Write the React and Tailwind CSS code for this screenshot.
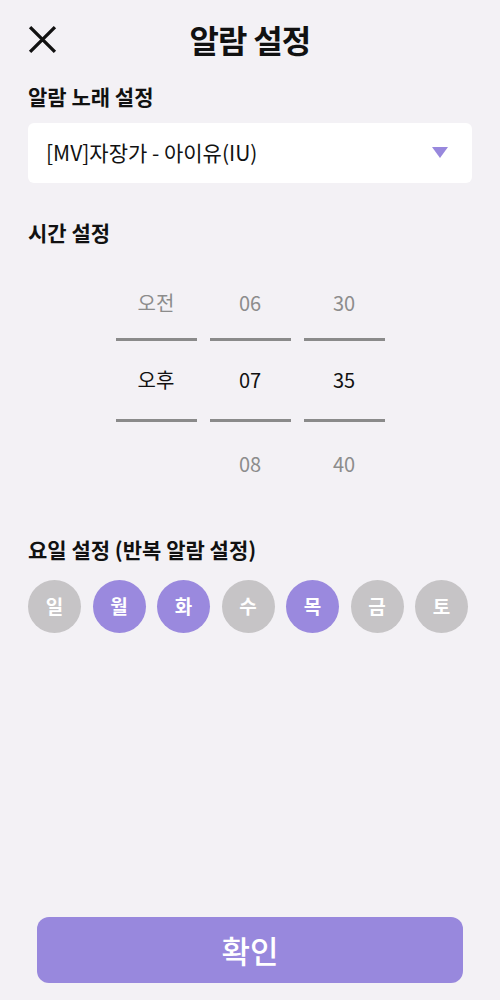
import React, { useState } from "react";

const days = ["일", "월", "화", "수", "목", "금", "토"];

const PickerColumn = ({ top, middle, bottom }) => (
    <div className="flex flex-col items-center w-[81px]">
        <div className="h-[50px] flex items-center text-[20px] text-[#8c8c8c]">{top}</div>
        <div className="h-[10px]" />
        <div className="w-full h-[3px] bg-[#8a8a8a]" />
        <div className="h-[78px] flex items-center text-[20px] text-[#111]">{middle}</div>
        <div className="w-full h-[3px] bg-[#8a8a8a]" />
        <div className="h-[84px] flex items-center text-[20px] text-[#8c8c8c]">{bottom}</div>
    </div>
);

const App = () => {
    const [selected, setSelected] = useState([false, true, true, false, true, false, false]);

    const toggleDay = (index) => {
        setSelected(selected.map((v, i) => (i === index ? !v : v)));
    };

    return (
        <div
            className="h-[1000px] flex flex-col bg-[#f3f1f5] text-[#111]"
            style={{ fontFamily: '"Noto Sans CJK KR", "Noto Sans", sans-serif' }}
        >
            {/* header */}
            <div className="relative flex items-center justify-center h-[78px]">
                <button className="absolute left-[28px] top-[25px] w-[29px] h-[29px]">
                    <svg viewBox="0 0 28 28" className="w-full h-full" fill="none" stroke="#111" strokeWidth="3.2">
                        <path d="M2 2 L26 26 M26 2 L2 26" />
                    </svg>
                </button>
                <h1 className="text-[32px] font-bold tracking-tight">알람 설정</h1>
            </div>

            <div className="px-[28px]">
                <p className="text-[21px] font-bold mt-[3px]">알람 노래 설정</p>
                <div className="mt-[10px] h-[60px] bg-white rounded-[6px] flex items-center justify-between pl-[18px] pr-[24px]">
                    <span className="text-[21px]">[MV]자장가 - 아이유(IU)</span>
                    <svg viewBox="0 0 16 11" className="w-[16px] h-[11px]">
                        <polygon points="0,0 16,0 8,11" fill="#9888dd" />
                    </svg>
                </div>

                <p className="text-[21px] font-bold mt-[34px]">시간 설정</p>
            </div>

            <div className="flex justify-center gap-[13px] mt-[30px]">
                <PickerColumn top="오전" middle="오후" bottom="" />
                <PickerColumn top="06" middle="07" bottom="08" />
                <PickerColumn top="30" middle="35" bottom="40" />
            </div>

            <div className="px-[28px]">
                <p className="text-[21px] font-bold mt-[28px]">요일 설정 (반복 알람 설정)</p>
                <div className="flex gap-[11.5px] mt-[14px]">
                    {days.map((d, i) => (
                        <button
                            key={d}
                            onClick={() => toggleDay(i)}
                            className={
                                "w-[53px] h-[53px] rounded-full flex items-center justify-center text-white text-[19px] font-bold " +
                                (selected[i] ? "bg-[#9a89de]" : "bg-[#c6c4c6]")
                            }
                        >
                            {d}
                        </button>
                    ))}
                </div>
            </div>

            <div className="mt-auto px-[37px] pb-[17px]">
                <button className="w-full h-[66px] rounded-[12px] bg-[#9888dd] text-white text-[31px] font-medium">
                    확인
                </button>
            </div>
        </div>
    );
};

export default App;
